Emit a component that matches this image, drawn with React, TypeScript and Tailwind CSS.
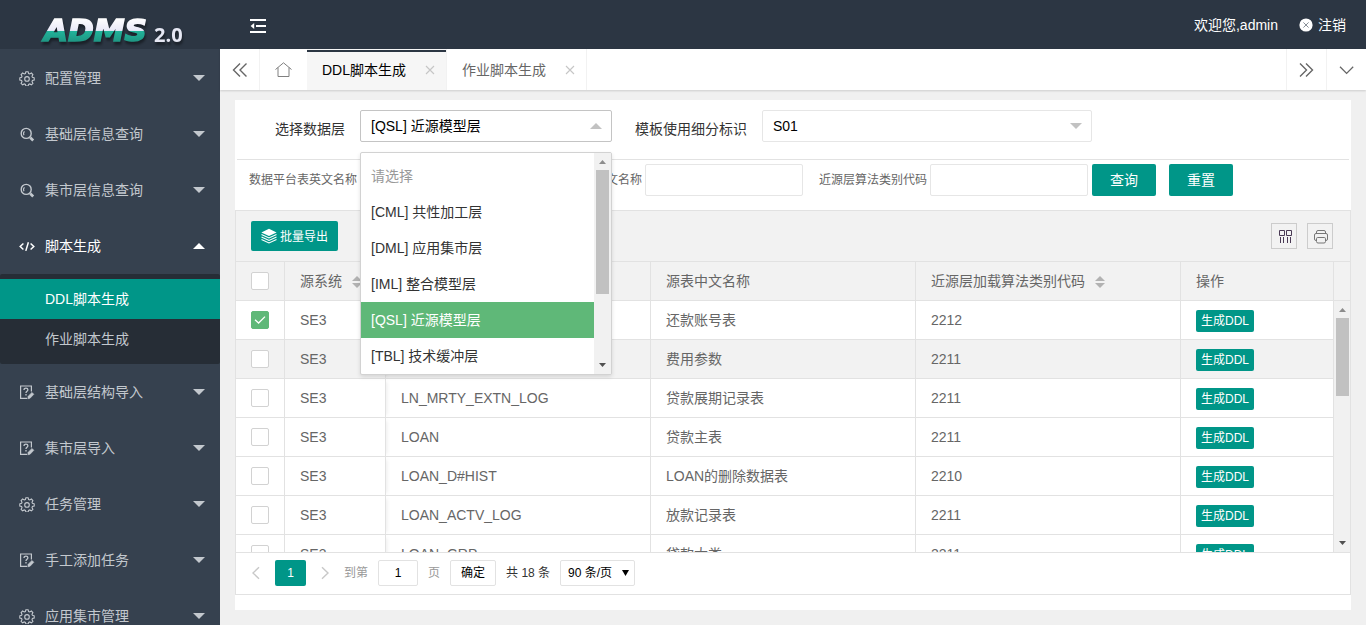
import React, { useState } from 'react';

interface MenuItem {
  label: string;
  icon: 'gear' | 'search' | 'code' | 'survey';
  children?: string[];
}

interface Row {
  system: string;
  table: string;
  name: string;
  code: string;
}

const MENU: MenuItem[] = [
  { label: '配置管理', icon: 'gear' },
  { label: '基础层信息查询', icon: 'search' },
  { label: '集市层信息查询', icon: 'search' },
  { label: '脚本生成', icon: 'code', children: ['DDL脚本生成', '作业脚本生成'] },
  { label: '基础层结构导入', icon: 'survey' },
  { label: '集市层导入', icon: 'survey' },
  { label: '任务管理', icon: 'gear' },
  { label: '手工添加任务', icon: 'survey' },
  { label: '应用集市管理', icon: 'gear' },
];

const LAYERS = [
  '请选择',
  '[CML] 共性加工层',
  '[DML] 应用集市层',
  '[IML] 整合模型层',
  '[QSL] 近源模型层',
  '[TBL] 技术缓冲层',
];

const ROWS: Row[] = [
  { system: 'SE3', table: '', name: '还款账号表', code: '2212' },
  { system: 'SE3', table: '', name: '费用参数', code: '2211' },
  { system: 'SE3', table: 'LN_MRTY_EXTN_LOG', name: '贷款展期记录表', code: '2211' },
  { system: 'SE3', table: 'LOAN', name: '贷款主表', code: '2211' },
  { system: 'SE3', table: 'LOAN_D#HIST', name: 'LOAN的删除数据表', code: '2210' },
  { system: 'SE3', table: 'LOAN_ACTV_LOG', name: '放款记录表', code: '2211' },
  { system: 'SE3', table: 'LOAN_GRP', name: '贷款大类', code: '2211' },
];

function MenuIcon({ name }: { name: MenuItem['icon'] }) {
  return (
    <svg className="w-4 h-4 shrink-0" viewBox="0 0 16 16" fill="none" stroke="currentColor" strokeWidth="1.1">
      {name === 'gear' && (
        <>
          <path d="M6.9 1.7h2.2l.5 1.8 1.1.4 1.7-.9 1.5 1.5-.9 1.7.4 1.1 1.8.5v2.2l-1.8.5-.4 1.1.9 1.7-1.5 1.5-1.7-.9-1.1.4-.5 1.8H6.900l-.5-1.8-1.1-.4-1.7.9-1.500-1.500.9-1.700-.4-1.100L.8 10V7.800l1.800-.5.4-1.100-.9-1.700L3.600 3l1.700.9 1.100-.4z" />
          <circle cx="8" cy="8.9" r="2.3" />
        </>
      )}
      {name === 'search' && (
        <>
          <circle cx="7.2" cy="7.4" r="5" strokeWidth="1.4" />
          <path d="M5 9.2C4.300 7.900 4.500 6.300 5.500 5.400" />
          <path d="M11.200 11.600l3 2.800" strokeWidth="2.8" />
        </>
      )}
      {name === 'code' && (
        <path d="M4.4 5.500L1.200 8.500l3.200 3M11.600 5.500l3.200 3-3.200 3M9.400 4.300L6.800 12.900" strokeWidth="1.5" />
      )}
      {name === 'survey' && (
        <>
          <path d="M8 14.400H1.600V2h10.800v5.600" strokeWidth="1.2" />
          <path d="M5 6c0-2.600 3.900-2.300 3.900-.2 0 1.500-1.900 1.400-1.900 3.100M7 10v1.400" strokeWidth="1.3" />
          <path d="M8.800 14.800l.4-2.600 3.800-3.800 1.800 1.900-3.700 3.900z" fill="currentColor" strokeWidth="0.6" />
        </>
      )}
    </svg>
  );
}

function Triangle({ up, className }: { up?: boolean; className: string }) {
  return (
    <svg className={className} viewBox="0 0 12 6" preserveAspectRatio="none" fill="currentColor">
      <path d={up ? 'M0 6h12L6 0z' : 'M0 0h12L6 6z'} />
    </svg>
  );
}

function SortIcon() {
  return (
    <span className="inline-flex flex-col gap-0.5 ml-2.5 align-middle text-[#b2b2b2]">
      <Triangle up className="w-2.5 h-[5px]" />
      <Triangle className="w-2.5 h-[5px]" />
    </span>
  );
}

function Chevrons({ right }: { right?: boolean }) {
  return (
    <svg className="w-4 h-4" viewBox="0 0 16 16" fill="none" stroke="currentColor" strokeWidth="1.4">
      <path d={right ? 'M1 1.5L7.500 8 1 14.500M7 1.500L13.500 8 7 14.500' : 'M8 1.500L1.500 8 8 14.500M14.500 1.500L8 8l6.500 6.500'} />
    </svg>
  );
}

function Checkbox({ label, defaultChecked }: { label: string; defaultChecked?: boolean }) {
  return (
    <span className="relative block w-[18px] h-[18px]">
      <input
        type="checkbox"
        aria-label={label}
        defaultChecked={defaultChecked}
        className="peer block appearance-none w-[18px] h-[18px] rounded-xs border border-[#d2d2d2] bg-white checked:bg-[#5fb878] checked:border-[#5fb878]"
      />
      <svg
        className="absolute inset-0 w-[18px] h-[18px] pointer-events-none opacity-0 peer-checked:opacity-100"
        viewBox="0 0 18 18"
        fill="none"
        stroke="#fff"
        strokeWidth="1.3"
      >
        <path d="M4 8.8l3.6 3.2L14 5.6" />
      </svg>
    </span>
  );
}

function ScrollBar({ thumb }: { thumb: string }) {
  return (
    <div className="w-[17px] shrink-0 flex flex-col items-center bg-[#f1f1f1] py-[7px]">
      <Triangle up className="w-[7px] h-1 shrink-0 text-[#8c8c8c]" />
      <div className={`w-[13px] mt-1.5 bg-[#c1c1c1] ${thumb}`} />
      <Triangle className="w-[7px] h-1 shrink-0 mt-auto text-[#505050]" />
    </div>
  );
}

function Columns() {
  return (
    <colgroup>
      <col className="w-[49px]" />
      <col className="w-[101px]" />
      <col className="w-[265px]" />
      <col className="w-[265px]" />
      <col className="w-[265px]" />
      <col />
    </colgroup>
  );
}

function Logo() {
  return (
    <svg className="w-40 h-[49px] ml-10 drop-shadow-[1px_3px_1px_rgba(0,0,0,0.4)]" viewBox="0 0 160 49">
      <defs>
        <linearGradient id="logo-fill" gradientUnits="userSpaceOnUse" x1="0" y1="18" x2="0" y2="42">
          <stop offset="0" stopColor="#fff" />
          <stop offset="0.52" stopColor="#e9e9f8" />
          <stop offset="0.54" stopColor="#21b39a" />
          <stop offset="1" stopColor="#1f9683" />
        </linearGradient>
      </defs>
      <text
        x="4"
        y="41"
        className="font-['DejaVu_Sans',sans-serif] font-bold italic text-[31px]"
        fill="url(#logo-fill)"
        stroke="url(#logo-fill)"
        strokeWidth="1.6"
      >
        ADMS
      </text>
      <text x="114" y="42" className="font-['Open_Sans',sans-serif] font-bold text-xl" fill="#e6e8f4">
        2.0
      </text>
    </svg>
  );
}

function Sidebar() {
  return (
    <aside className="w-[220px] shrink-0 flex flex-col bg-[#36414f] text-[#c3c8ce] overflow-hidden">
      <div className="h-[49px] shrink-0 bg-[#2c3643]">
        <Logo />
      </div>
      <nav className="pt-px">
        {MENU.map((item) => (
          <div key={item.label}>
            <a
              href="#"
              className={`flex items-center h-14 pl-[19px] pr-[15px] ${item.children ? 'text-white' : ''}`}
            >
              <MenuIcon name={item.icon} />
              <span className="ml-2.5 flex-1">{item.label}</span>
              <Triangle up={!!item.children} className="w-3 h-1.5" />
            </a>
            {item.children && (
              <div className="bg-[#262d36] py-[5px] rounded-xs">
                {item.children.map((child, index) => (
                  <a
                    key={child}
                    href="#"
                    className={`block pl-[45px] leading-10 ${index === 0 ? 'bg-[#009688] text-white' : ''}`}
                  >
                    {child}
                  </a>
                ))}
              </div>
            )}
          </div>
        ))}
      </nav>
    </aside>
  );
}

function Header() {
  return (
    <header className="h-[49px] shrink-0 bg-[#2c3643] text-white flex items-center justify-between pl-[30px] pr-5">
      <button aria-label="收起菜单" className="mt-0.5">
        <svg className="w-4 h-4" viewBox="0 0 16 16" fill="currentColor">
          <path d="M0 1h16v2H0zM6 7h10v2H6zM0 13h16v2H0zM4.200 5v6L.6 8z" />
        </svg>
      </button>
      <div className="flex items-center gap-[21px]">
        <a href="#">欢迎您,admin</a>
        <a href="#" className="flex items-center gap-[5px]">
          <svg className="w-3.5 h-3.5" viewBox="0 0 14 14">
            <circle cx="7" cy="7" r="6.6" fill="#fff" />
            <path d="M4.4 4.4l5.2 5.2M9.6 4.4L4.4 9.6" stroke="#7b828b" strokeWidth="0.9" />
          </svg>
          注销
        </a>
      </div>
    </header>
  );
}

function Tab({ label, active }: { label: string; active?: boolean }) {
  return (
    <div
      className={`relative flex items-center gap-[18px] pl-[15px] pr-2.5 border-r border-[#f2f2f2] ${
        active ? 'bg-[#f6f6f6] text-black' : 'text-[#666]'
      }`}
    >
      {active && <span className="absolute left-0 right-0 top-px h-0.5 bg-[#2c3643]" />}
      <a href="#">{label}</a>
      <button aria-label={`关闭 ${label}`}>
        <svg className="w-3 h-3" viewBox="0 0 12 12" stroke="#c6c6c6" strokeWidth="1.1">
          <path d="M2 2l8 8M10 2l-8 8" />
        </svg>
      </button>
    </div>
  );
}

function TabBar() {
  return (
    <div className="relative h-[41px] shrink-0 flex bg-white text-[#666] shadow-[0_1px_2px_rgba(0,0,0,0.15)]">
      <button aria-label="向左" className="w-10 flex items-center justify-center border-r border-[#f2f2f2]">
        <Chevrons />
      </button>
      <button aria-label="首页" className="w-[47px] flex items-center justify-center">
        <svg className="w-[18px] h-[18px]" viewBox="0 0 18 18" fill="none" stroke="#808080" strokeWidth="1">
          <path d="M.5 8.5L8.500 1.800l8 6.700M3 6.500v9h11v-9" />
        </svg>
      </button>
      <Tab label="DDL脚本生成" active />
      <Tab label="作业脚本生成" />
      <button aria-label="向右" className="w-10 ml-auto flex items-center justify-center border-l border-[#f2f2f2]">
        <Chevrons right />
      </button>
      <button aria-label="更多" className="w-10 flex items-center justify-center border-l border-[#f2f2f2]">
        <svg className="w-4 h-4" viewBox="0 0 16 16" fill="none" stroke="currentColor" strokeWidth="1.3">
          <path d="M1 4.8l6.6 6.6 6.6-6.6" />
        </svg>
      </button>
    </div>
  );
}

function LayerSelect() {
  const [layer, setLayer] = useState('[QSL] 近源模型层');

  return (
    <div className="relative w-[252px]">
      <select
        id="layer"
        value={layer}
        onChange={(e) => setLayer(e.target.value)}
        className="appearance-none block w-full h-8 pl-2.5 rounded-xs border border-[#c4c4c4] bg-white text-black"
      >
        {LAYERS.map((item) => (
          <option key={item}>{item}</option>
        ))}
      </select>
      <Triangle up className="absolute right-2.5 top-[13px] w-3 h-1.5 text-[#c2c2c2] pointer-events-none" />
      <div className="absolute z-20 left-0 top-[42px] w-full h-[223px] flex rounded-xs border border-[#d2d2d2] bg-white shadow-[0_2px_4px_rgba(0,0,0,0.12)] overflow-hidden">
        <ul className="flex-1 pt-[5px] overflow-hidden" role="listbox" aria-label="选择数据层">
          {LAYERS.map((item, index) => (
            <li
              key={item}
              role="option"
              aria-selected={item === layer}
              onClick={() => setLayer(item)}
              className={`pl-2.5 leading-9 ${
                item === layer ? 'bg-[#5fb878] text-white' : index === 0 ? 'text-[#999]' : 'text-[#333]'
              }`}
            >
              {item}
            </li>
          ))}
        </ul>
        <ScrollBar thumb="h-[124px]" />
      </div>
    </div>
  );
}

function SearchField({ id, label }: { id: string; label: string }) {
  return (
    <div className="flex items-center gap-[3px]">
      <label htmlFor={id} className="text-xs text-[#666] whitespace-nowrap">{label}</label>
      <input id={id} type="text" className="w-[158px] h-8 px-2.5 rounded-xs border border-[#e6e6e6]" />
    </div>
  );
}

function DataTable() {
  const cell = 'border-r border-b border-[#e2e2e2] px-[15px] h-[39px] text-left font-normal whitespace-nowrap';

  return (
    <div className="flex-1 min-h-0 flex flex-col border border-[#e2e2e2] text-[#666]">
      <div className="flex items-center justify-between bg-[#f2f2f2] border-b border-[#e2e2e2] py-2.5 pl-[15px] pr-[17px]">
        <button className="flex items-center gap-[3px] h-[30px] px-2.5 rounded-xs bg-[#009688] text-white text-xs">
          <svg className="w-4 h-4" viewBox="0 0 16 16" fill="none" stroke="#fff" strokeWidth="1.1">
            <path d="M8 .8l7.6 3.6L8 8 .4 4.400z" fill="#fff" stroke="none" />
            <path d="M.5 6.500L8 10l7.500-3.500M.5 9L8 12.500 15.500 9M.5 11.500L8 15l7.500-3.500" />
          </svg>
          <span className="pt-0.5">批量导出</span>
        </button>
        <div className="flex gap-2.5">
          <button aria-label="筛选列" className="w-[26px] h-[26px] flex items-center justify-center border border-[#ccc]">
            <svg className="w-4 h-4" viewBox="0 0 16 16" fill="none" stroke="#4a3a55" strokeWidth="1">
              <path d="M3.5 2.500h5v5h-5zM10.500 2.500h5v5h-5zM4.500 9v6M7.500 9v6M11.500 9v6M14.500 9v6" />
            </svg>
          </button>
          <button aria-label="打印" className="w-[26px] h-[26px] flex items-center justify-center border border-[#ccc]">
            <svg className="w-4 h-4" viewBox="0 0 16 16" fill="none" stroke="#777" strokeWidth="1">
              <path d="M4.5 5.500V4q0-1.500 1.500-1.500h6q1.500 0 1.500 1.500v1.500M4.500 12.500H4q-1.500 0-1.500-1.500V7q0-1.500 1.500-1.500h10q1.500 0 1.500 1.500v4q0 1.500-1.500 1.500h-.5" />
              <path d="M5.700 9.500h6.600q1.200 0 1.200 1.200v2.800q0 1.500-1.500 1.500H6q-1.500 0-1.500-1.500v-2.800q0-1.200 1.200-1.200z" fill="#f2f2f2" />
            </svg>
          </button>
        </div>
      </div>

      <div className="flex bg-[#f2f2f2]">
        <table className="flex-1 w-0 table-fixed border-separate border-spacing-0">
          <Columns />
          <thead>
            <tr>
              <th className={cell}><Checkbox label="全选" /></th>
              <th className={cell}>源系统<SortIcon /></th>
              <th className={cell} />
              <th className={cell}>源表中文名称</th>
              <th className={cell}>近源层加载算法类别代码<SortIcon /></th>
              <th className={cell}>操作</th>
            </tr>
          </thead>
        </table>
        <div className="w-4 shrink-0 border-b border-[#e2e2e2]" />
      </div>

      <div className="flex-1 min-h-0 flex overflow-hidden">
        <div className="flex-1 min-w-0 overflow-hidden">
          <table className="w-full table-fixed border-separate border-spacing-0">
            <Columns />
            <tbody>
              {ROWS.map((row, index) => (
                <tr key={row.name} className={index === 1 ? 'bg-[#f2f2f2]' : 'bg-white'}>
                  <td className={cell}><Checkbox label={row.name} defaultChecked={index === 0} /></td>
                  <td className={`${cell} relative shadow-[4px_0_4px_-3px_rgba(0,0,0,0.08)]`}>{row.system}</td>
                  <td className={cell}>{row.table}</td>
                  <td className={cell}>{row.name}</td>
                  <td className={cell}>{row.code}</td>
                  <td className={`${cell} pt-0.5`}>
                    <button className="block h-[22px] px-[5px] rounded-xs bg-[#009688] text-white text-xs">生成DDL</button>
                  </td>
                </tr>
              ))}
            </tbody>
          </table>
        </div>
        <div className="w-4 shrink-0 flex justify-center bg-[#f1f1f1]">
          <ScrollBar thumb="h-[78px]" />
        </div>
      </div>

      <Pagination />
    </div>
  );
}

function Pagination() {
  return (
    <div className="flex items-center border-t border-[#e2e2e2] pl-px pt-[7px] pb-2 text-xs">
      <button aria-label="上一页" className="w-[38px] flex justify-center text-[#c8c8c8]">
        <svg className="w-3.5 h-3.5" viewBox="0 0 14 14" fill="none" stroke="currentColor" strokeWidth="1.4">
          <path d="M10 1.200L4 7l6 5.800" />
        </svg>
      </button>
      <button className="w-[31px] h-[26px] rounded-xs bg-[#009688] text-white">1</button>
      <button aria-label="下一页" className="w-[38px] flex justify-center text-[#c8c8c8]">
        <svg className="w-3.5 h-3.5" viewBox="0 0 14 14" fill="none" stroke="currentColor" strokeWidth="1.4">
          <path d="M4 1.200L10 7l-6 5.800" />
        </svg>
      </button>
      <div className="flex items-center gap-2.5 text-[#999]">
        <label htmlFor="page">到第</label>
        <input
          id="page"
          type="text"
          defaultValue="1"
          className="w-10 h-[26px] rounded-xs border border-[#e2e2e2] bg-white text-center text-black"
        />
        <span>页</span>
        <button className="h-[26px] px-2.5 rounded-xs border border-[#e2e2e2] bg-white text-black">确定</button>
        <span className="text-[#333]">共 18 条</span>
        <div className="relative">
          <select
            aria-label="每页条数"
            defaultValue="90 条/页"
            className="appearance-none block w-[75px] h-[26px] pl-[7px] rounded-xs border border-[#e2e2e2] bg-white text-black"
          >
            <option>30 条/页</option>
            <option>60 条/页</option>
            <option>90 条/页</option>
          </select>
          <Triangle className="absolute right-1.5 top-2.5 w-[7px] h-1.5 text-black pointer-events-none" />
        </div>
      </div>
    </div>
  );
}

export default function App() {
  return (
    <div className="h-screen flex bg-[#f0f0f0] overflow-hidden text-sm font-['Liberation_Sans','Noto_Sans_CJK_SC',sans-serif]">
      <Sidebar />
      <div className="flex-1 min-w-0 flex flex-col">
        <Header />
        <TabBar />
        <main className="flex-1 min-h-0 flex flex-col px-[15px] pt-2.5 pb-[15px]">
          <div className="flex-1 min-h-0 flex flex-col bg-white pb-[15px]">
            <form className="flex items-start gap-[15px] mx-0.5 pl-[38px] pt-2.5 pb-[11px] border-b border-[#e2e2e2] text-[#333]">
              <label htmlFor="layer" className="py-[9px] leading-5">选择数据层</label>
              <LayerSelect />
              <label htmlFor="segment" className="ml-2 py-[9px] leading-5">模板使用细分标识</label>
              <div className="relative w-[330px]">
                <select
                  id="segment"
                  className="appearance-none block w-full h-8 pl-2.5 rounded-xs border border-[#e6e6e6] bg-white text-black"
                >
                  <option>S01</option>
                </select>
                <Triangle className="absolute right-2.5 top-[13px] w-3 h-1.5 text-[#c2c2c2] pointer-events-none" />
              </div>
            </form>
            <form className="flex items-center gap-4 pl-3.5 pt-1 pb-3.5">
              <SearchField id="table-en" label="数据平台表英文名称" />
              <SearchField id="table-cn" label="数据平台表中文名称" />
              <div className="flex items-center gap-1">
                <SearchField id="algorithm" label="近源层算法类别代码" />
                <div className="flex gap-[13px]">
                  <button type="button" className="w-16 h-8 rounded-xs bg-[#009688] text-white">查询</button>
                  <button type="reset" className="w-16 h-8 rounded-xs bg-[#009688] text-white">重置</button>
                </div>
              </div>
            </form>
            <DataTable />
          </div>
        </main>
      </div>
    </div>
  );
}
